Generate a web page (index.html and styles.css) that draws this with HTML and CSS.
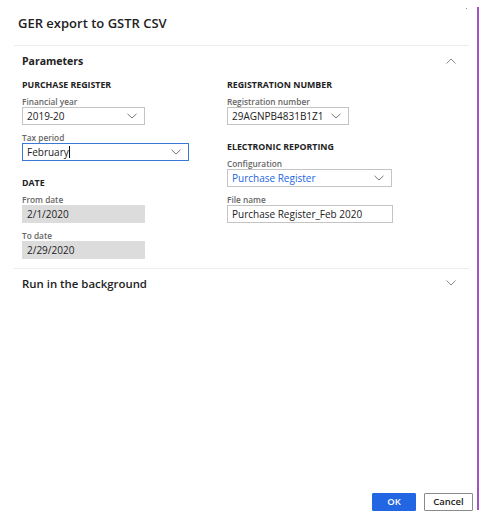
FILE: index.html
```html
<!DOCTYPE html>
<html lang="en">
<head>
<meta charset="utf-8">
<title>GER export to GSTR CSV</title>
<link rel="stylesheet" href="styles.css">
</head>
<body>
<div class="screen">
  <div class="dialog">
    <header class="title-bar">
      <h1 class="title">GER export to GSTR CSV</h1>
      <span class="dot"></span>
    </header>

    <section class="panel">
      <div class="panel-head">
        <h2 class="panel-title">Parameters</h2>
        <svg class="panel-chev" width="10" height="6" viewBox="0 0 10 6"><path d="M0.5 5.5 L5 1 L9.5 5.5" fill="none" stroke="#8a8a8a" stroke-width="1"/></svg>
      </div>
      <div class="panel-body">
        <div class="col col-left">
          <h3 class="group-title">PURCHASE REGISTER</h3>
          <div class="field">
            <span class="label">Financial year</span>
            <div class="box select w123"><span class="val">2019-20</span>
              <svg class="chev" width="10" height="6" viewBox="0 0 10 6"><path d="M0.5 0.8 L5 5 L9.5 0.8" fill="none" stroke="#777" stroke-width="1"/></svg></div>
          </div>
          <div class="field">
            <span class="label">Tax period</span>
            <div class="box select focused w167"><span class="val">February<span class="caret"></span></span>
              <svg class="chev" width="10" height="6" viewBox="0 0 10 6"><path d="M0.5 0.8 L5 5 L9.5 0.8" fill="none" stroke="#777" stroke-width="1"/></svg></div>
          </div>
          <h3 class="group-title gap">DATE</h3>
          <div class="field">
            <span class="label">From date</span>
            <div class="box readonly w123"><span class="val">2/1/2020</span></div>
          </div>
          <div class="field">
            <span class="label">To date</span>
            <div class="box readonly w123"><span class="val">2/29/2020</span></div>
          </div>
        </div>
        <div class="col col-right">
          <h3 class="group-title">REGISTRATION NUMBER</h3>
          <div class="field">
            <span class="label">Registration number</span>
            <div class="box select w122"><span class="val">29AGNPB4831B1Z1</span>
              <svg class="chev" width="10" height="6" viewBox="0 0 10 6"><path d="M0.5 0.8 L5 5 L9.5 0.8" fill="none" stroke="#777" stroke-width="1"/></svg></div>
          </div>
          <h3 class="group-title gap">ELECTRONIC REPORTING</h3>
          <div class="field">
            <span class="label">Configuration</span>
            <div class="box select w165"><span class="val link">Purchase Register</span>
              <svg class="chev" width="10" height="6" viewBox="0 0 10 6"><path d="M0.5 0.8 L5 5 L9.5 0.8" fill="none" stroke="#777" stroke-width="1"/></svg></div>
          </div>
          <div class="field">
            <span class="label">File name</span>
            <div class="box w166"><span class="val">Purchase Register_Feb 2020</span></div>
          </div>
        </div>
      </div>
    </section>

    <section class="panel collapsed">
      <div class="panel-head">
        <h2 class="panel-title run">Run in the background</h2>
        <svg class="panel-chev" width="10" height="6" viewBox="0 0 10 6"><path d="M0.5 0.5 L5 5 L9.5 0.5" fill="none" stroke="#8a8a8a" stroke-width="1"/></svg>
      </div>
    </section>

    <div class="spacer"></div>

    <footer class="actions">
      <button class="btn btn-ok" type="button">OK</button>
      <button class="btn btn-cancel" type="button">Cancel</button>
    </footer>
  </div>
  <div class="edge"></div>
</div>
</body>
</html>
```

FILE: styles.css
```css
* { box-sizing: border-box; }

html, body {
  margin: 0;
  padding: 0;
  background: #ffffff;
}

body {
  font-family: "Open Sans", "Noto Sans", "Liberation Sans", sans-serif;
  color: #222222;
}

.screen {
  display: flex;
  width: 483px;
  height: 519px;
}

.dialog {
  width: 477px;
  display: flex;
  flex-direction: column;
  padding-left: 14px;
}

.edge {
  width: 2px;
  margin: 7px 0 9px 0;
  background: #a353c0;
}

.title-bar {
  display: flex;
  align-items: flex-start;
  justify-content: space-between;
  width: 455px;
  height: 46px;
  padding: 14px 0 0 4px;
  border-bottom: 1px solid #ececec;
}

.title {
  margin: 0;
  font-size: 13px;
  line-height: 18px;
  font-weight: 600;
  color: #222;
}

.dot {
  width: 1px;
  height: 1px;
  background: #999;
  margin-top: -6px;
  margin-right: 2px;
}

.panel {
  width: 455px;
  border-bottom: 1px solid #ececec;
}

.panel.collapsed { border-bottom: none; }

.panel-head {
  display: flex;
  align-items: center;
  justify-content: space-between;
  height: 30px;
  padding: 0 13px 0 8px;
}

.panel.collapsed .panel-head { height: 28px; }

.panel-title {
  margin: 0;
  font-size: 10.5px;
  font-weight: 700;
  color: #222;
}

.panel-title.run {
  font-size: 11.4px;
  font-weight: 600;
}

.panel-body {
  display: grid;
  grid-template-columns: 205px 1fr;
  padding: 3px 0 9px 8px;
}

.col {
  display: flex;
  flex-direction: column;
}

.group-title {
  margin: 0;
  height: 12px;
  font-size: 8.8px;
  line-height: 12px;
  font-weight: 700;
  color: #222;
}

.group-title.gap { margin-top: 16px; }

.field {
  display: flex;
  flex-direction: column;
  margin-top: 7px;
}

.group-title + .field { margin-top: 5px; }

.label {
  height: 11px;
  font-size: 8.3px;
  line-height: 11px;
  font-weight: 600;
  color: #666;
}

.box {
  display: flex;
  align-items: center;
  justify-content: space-between;
  height: 18px;
  padding: 0 7px 0 4px;
  border: 1px solid #c4c4c4;
  background: #fff;
}

.box .val {
  font-size: 10px;
  line-height: 16px;
  color: #222;
  white-space: nowrap;
  display: flex;
  align-items: center;
}

.box .val.link { color: #2266e3; }

.box.focused { border-color: #3a78d8; }

.box.readonly {
  border-color: #dcdcdc;
  background: #dcdcdc;
}

.caret {
  display: inline-block;
  width: 1px;
  height: 12px;
  background: #111;
}

.chev { flex: none; }

.w122 { width: 122px; }
.w123 { width: 123px; }
.w165 { width: 165px; }
.w166 { width: 166px; }
.w167 { width: 167px; }

.spacer { flex: 1; }

.actions {
  display: flex;
  justify-content: flex-end;
  gap: 8px;
  padding: 0 0 8px 0;
  width: 459px;
}

.btn {
  height: 18px;
  padding: 0;
  font-family: inherit;
  font-size: 9.5px;
  font-weight: 600;
  line-height: 16px;
  border-radius: 1px;
}

.btn-ok {
  width: 44px;
  background: #2266e3;
  border: 1px solid #2266e3;
  color: #fff;
}

.btn-cancel {
  width: 49px;
  background: #fff;
  border: 1px solid #8a8a8a;
  color: #222;
}
```
